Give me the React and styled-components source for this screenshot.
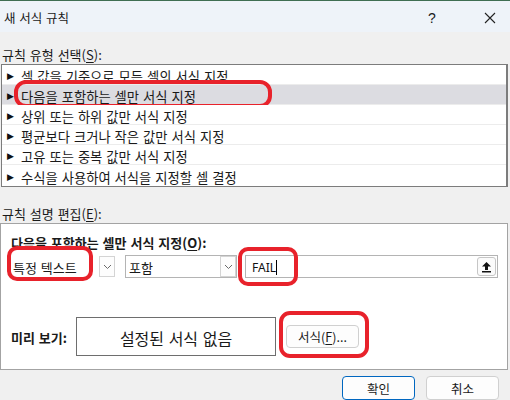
import React from 'react'
import styled, { createGlobalStyle } from 'styled-components'

const GlobalStyle = createGlobalStyle`
  html, body {
    margin: 0;
    padding: 0;
    background: #f0f0f0;
  }
  body {
    font-family: "Noto Sans CJK KR", "Noto Sans", sans-serif;
    font-size: 13px;
    word-spacing: 1px;
    color: #1a1a1a;
  }
`

const Window = styled.div`
  width: 510px;
  height: 400px;
  overflow: hidden;
  display: flex;
  flex-direction: column;
  background: #f0f0f0;
`

const TitleBar = styled.div`
  height: 34px;
  border-top: 1px solid #3f6e52;
  background: #eef3f9;
  display: flex;
  align-items: center;
  padding: 3px 0 0 4px;
  box-sizing: border-box;
`

const Title = styled.div`
  flex: 1;
  font-size: 12.5px;
  line-height: 1;
`

const Help = styled.div`
  width: 24px;
  font-size: 14px;
  font-family: "Liberation Sans", sans-serif;
  margin-right: 32px;
  text-align: center;
`

const Close = styled.div`
  width: 28px;
  display: flex;
  justify-content: center;
  margin-right: 6px;
`

const Body = styled.div`
  padding: 0 2px 0 1px;
  display: flex;
  flex-direction: column;
`

const SectionLabel = styled.div`
  height: ${p => p.$h}px;
  padding-top: ${p => p.$top}px;
  box-sizing: border-box;
  display: flex;
  align-items: center;
  line-height: 1;
  padding-left: 1px;
`

const U = styled.span`
  text-decoration: underline;
  text-underline-offset: 2px;
`

const List = styled.div`
  border: 1px solid #7c7c7c;
  border-right-width: 2px;
  background: #fff;
  display: flex;
  flex-direction: column;
`

const Row = styled.div`
  position: relative;
  height: 20px;
  box-sizing: border-box;
  border-bottom: 1px solid #ececec;
  background: ${p => (p.$selected ? '#dcdce1' : '#fff')};
  display: flex;
  align-items: center;
  padding: 3px 0 0 5px;
  gap: 5px;
  font-size: 13.3px;
  &:last-child {
    border-bottom: none;
    height: 21px;
  }
`

const Arrow = styled.span`
  font-size: 9px;
  width: 9px;
  color: #111;
  font-family: "DejaVu Sans", sans-serif;
`

const Ring = styled.span`
  position: absolute;
  pointer-events: none;
  border: 4px solid #e8222b;
  border-radius: ${p => p.$r || 11}px;
  box-sizing: border-box;
  left: ${p => p.$x}px;
  top: ${p => p.$y}px;
  width: ${p => p.$w}px;
  height: ${p => p.$h}px;
`

const Panel = styled.div`
  height: 137px;
  border: 1px solid #a3a3a3;
  margin-left: -1px;
  background: #fff;
  padding: 8px 9px 0 7px;
  display: flex;
  flex-direction: column;
`

const PanelHeading = styled.div`
  font-weight: bold;
  height: 18px;
  box-sizing: border-box;
  padding: 2px 0 0 3px;
  display: flex;
  align-items: center;
  line-height: 1;
`

const ComboRow = styled.div`
  margin-top: 5px;
  display: flex;
  height: 23px;
`

const Combo = styled.div`
  position: relative;
  width: ${p => p.$w}px;
  margin-right: ${p => p.$gap}px;
  border: 1px solid ${p => (p.$plain ? 'transparent' : '#b4b4b4')};
  box-sizing: border-box;
  display: flex;
  align-items: center;
  padding-left: ${p => p.$pad}px;
  background: #fff;
`

const ComboText = styled.span`
  flex: 1;
  line-height: 1;
  padding-top: 2px;
`

const DropButton = styled.span`
  width: 16px;
  height: 21px;
  border: 1px solid #d4d4d4;
  box-sizing: border-box;
  display: flex;
  align-items: center;
  justify-content: center;
  background: #fdfdfd;
`

const TextInput = styled.div`
  position: relative;
  flex: 1;
  border: 1px solid #b4b4b4;
  box-sizing: border-box;
  display: flex;
  align-items: center;
  padding: 0 1px 0 6px;
`

const InputText = styled.span`
  flex: 1;
  font-family: "Noto Sans", sans-serif;
  font-size: 12px;
  color: #111;
  display: flex;
  align-items: center;
  padding-top: 1px;
`

const Caret = styled.span`
  width: 1px;
  height: 15px;
  background: #000;
`

const UpButton = styled.span`
  width: 19px;
  height: 19px;
  border: 1px solid #c6c6c6;
  border-radius: 3px;
  box-sizing: border-box;
  display: flex;
  align-items: center;
  justify-content: center;
  background: #fbfbfb;
`

const PreviewRow = styled.div`
  margin-top: 39px;
  display: flex;
  align-items: center;
  height: 39px;
`

const PreviewLabel = styled.div`
  font-weight: bold;
  width: 68px;
  padding: 2px 0 0 3px;
  box-sizing: border-box;
  line-height: 1;
`

const PreviewBox = styled.div`
  width: 200px;
  height: 39px;
  border: 1px solid #6e6e6e;
  box-sizing: border-box;
  display: flex;
  align-items: center;
  justify-content: center;
  padding-top: 2px;
  font-size: 16px;
  margin-right: 10px;
`

const ButtonWrap = styled.div`
  position: relative;
  display: flex;
`

const Button = styled.div`
  width: ${p => p.$w}px;
  height: ${p => p.$h}px;
  border: 1px solid ${p => (p.$primary ? '#0067c0' : '#d0d0d0')};
  border-radius: 4px;
  background: #fdfdfd;
  box-sizing: border-box;
  display: flex;
  align-items: center;
  justify-content: center;
  padding-top: 2px;
  font-size: 12.5px;
  line-height: 1;
`

const Footer = styled.div`
  display: flex;
  justify-content: flex-end;
  gap: 11px;
  padding: 6px 9px 0 0;
`

const Chevron = () => (
  <svg width="9" height="6" viewBox="0 0 9 6">
    <path d="M1 1 L4.5 4.5 L8 1" fill="none" stroke="#6b6b6b" strokeWidth="1" />
  </svg>
)

const UpArrow = () => (
  <svg width="11" height="12" viewBox="0 0 11 12">
    <path d="M5.5 1 L10 5.5 L7 5.5 L7 9 L4 9 L4 5.5 L1 5.5 Z" fill="#111" />
    <rect x="1" y="10" width="9" height="1.5" fill="#111" />
  </svg>
)

const CloseIcon = () => (
  <svg width="12" height="12" viewBox="0 0 12 12">
    <path d="M1 1 L11 11 M11 1 L1 11" stroke="#222" strokeWidth="1.1" />
  </svg>
)

const rules = [
  '셀 값을 기준으로 모든 셀의 서식 지정',
  '다음을 포함하는 셀만 서식 지정',
  '상위 또는 하위 값만 서식 지정',
  '평균보다 크거나 작은 값만 서식 지정',
  '고유 또는 중복 값만 서식 지정',
  '수식을 사용하여 서식을 지정할 셀 결정',
]

export default function App() {
  return (
    <Window>
      <GlobalStyle />
      <TitleBar>
        <Title>새 서식 규칙</Title>
        <Help>?</Help>
        <Close><CloseIcon /></Close>
      </TitleBar>

      <Body>
        <SectionLabel $h={32} $top={12}>규칙 유형 선택(<U>S</U>):</SectionLabel>
        <List>
          {rules.map((r, i) => (
            <Row key={r} $selected={i === 1}>
              <Arrow>▶</Arrow>
              <span>{r}</span>
              {i === 1 && <Ring $x={12} $y={-5} $w={258} $h={28} $r={12} />}
            </Row>
          ))}
        </List>

        <SectionLabel $h={36} $top={16}>규칙 설명 편집(<U>E</U>):</SectionLabel>
        <Panel>
          <PanelHeading>다음을 포함하는 셀만 서식 지정(<U>O</U>):</PanelHeading>
          <ComboRow>
            <Combo $w={108} $gap={9} $pad={4} $plain>
              <ComboText>특정 텍스트</ComboText>
              <DropButton><Chevron /></DropButton>
              <Ring $x={-2} $y={-10} $w={86} $h={35} $r={10} />
            </Combo>
            <Combo $w={112} $gap={8} $pad={3}>
              <ComboText>포함</ComboText>
              <DropButton><Chevron /></DropButton>
            </Combo>
            <TextInput>
              <InputText>FAIL<Caret /></InputText>
              <UpButton><UpArrow /></UpButton>
              <Ring $x={-8} $y={-9} $w={60} $h={39} $r={10} />
            </TextInput>
          </ComboRow>
          <PreviewRow>
            <PreviewLabel>미리 보기:</PreviewLabel>
            <PreviewBox>설정된 서식 없음</PreviewBox>
            <ButtonWrap>
              <Button $w={73} $h={23}>서식(<U>F</U>)...</Button>
              <Ring $x={-7} $y={-14} $w={90} $h={47} $r={11} />
            </ButtonWrap>
          </PreviewRow>
        </Panel>

        <Footer>
          <Button $w={73} $h={24} $primary>확인</Button>
          <Button $w={73} $h={24}>취소</Button>
        </Footer>
      </Body>
    </Window>
  )
}
